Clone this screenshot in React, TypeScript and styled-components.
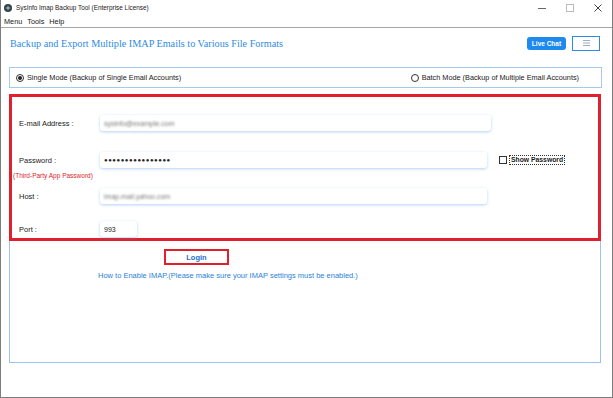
import styled, { createGlobalStyle } from 'styled-components';

const GlobalStyle = createGlobalStyle`
  html, body {
    margin: 0;
    padding: 0;
    background: #ffffff;
  }
  * {
    box-sizing: border-box;
  }
`

const Window = styled.div`
  width: 613px;
  height: 398px;
  border: 1px solid #7d7d7d;
  border-top: none;
  background: #ffffff;
  display: flex;
  flex-direction: column;
  font-family: "Liberation Sans", Arial, sans-serif;
  color: #1a1a1a;
  overflow: hidden;
`

const TitleBar = styled.div`
  height: 15px;
  display: flex;
  align-items: center;
  padding-left: 3px;
  font-size: 6.4px;
`

const AppIcon = styled.span`
  width: 8px;
  height: 8px;
  border-radius: 50%;
  background: radial-gradient(circle at 50% 50%, #9fb3b8 0 25%, #34474d 30% 100%);
  margin-right: 4px;
`

const TitleText = styled.span`
  flex: 1;
`

const WindowControls = styled.div`
  display: flex;
  align-items: center;
  height: 100%;
`

const ControlButton = styled.span`
  width: 28px;
  display: flex;
  justify-content: center;
  align-items: center;
  color: #555;
`

const MenuBar = styled.div`
  height: 13px;
  display: flex;
  align-items: center;
  gap: 5px;
  padding-left: 3px;
  font-size: 7.3px;
  border-bottom: 1px solid #a6a6a6;
`

const Header = styled.div`
  height: 30px;
  display: flex;
  align-items: center;
  justify-content: space-between;
  padding: 0 12px 0 9px;
`

const Heading = styled.h1`
  margin: 0;
  font-family: "Liberation Serif", "Times New Roman", serif;
  font-weight: normal;
  font-size: 10.2px;
  color: #2e8be2;
`

const HeaderActions = styled.div`
  display: flex;
  align-items: center;
  gap: 6px;
`

const ChatButton = styled.button`
  height: 13px;
  width: 39px;
  padding: 0;
  border: none;
  border-radius: 3px;
  background: #1d8af0;
  color: #fff;
  font-family: "Liberation Sans", Arial, sans-serif;
  font-weight: bold;
  font-size: 6.5px;
`

const MenuButton = styled.button`
  height: 15px;
  width: 28px;
  padding: 0;
  border: 1.5px solid #2d8be6;
  background: #fff;
  display: flex;
  align-items: center;
  justify-content: center;
`

const ModePanel = styled.div`
  margin: 9px 10px 0 8px;
  height: 21px;
  border: 1px solid #a7c9ee;
  display: flex;
  align-items: center;
  justify-content: space-between;
  padding: 0 22px 0 6px;
  font-size: 7.3px;
`

const RadioOption = styled.label`
  display: flex;
  align-items: center;
  gap: 3px;
`

const Radio = styled.span<{ $checked?: boolean }>`
  width: 8px;
  height: 8px;
  border-radius: 50%;
  border: 1px solid #333;
  display: flex;
  align-items: center;
  justify-content: center;

  &::after {
    content: '';
    width: 4px;
    height: 4px;
    border-radius: 50%;
    background: ${p => (p.$checked ? '#222' : 'transparent')};
  }
`

const Panel = styled.div`
  margin: 6px 11px 0 8px;
  height: 269px;
  border: 1px solid #9cc3ef;
  border-top: none;
`

const FormBox = styled.div`
  margin: 0 -1px;
  border: 3px solid #e0202d;
  height: 147px;
  padding: 18px 0 0 7px;
  display: flex;
  flex-direction: column;
`

const Row = styled.div<{ $gap: number }>`
  display: flex;
  align-items: center;
  height: 16px;
  margin-top: ${p => p.$gap}px;
`

const Label = styled.span`
  width: 81px;
  font-size: 7.5px;
`

const Field = styled.div<{ $width: number }>`
  width: ${p => p.$width}px;
  height: 16px;
  background: #fff;
  border-radius: 3px;
  box-shadow: 0 1px 3px rgba(90, 150, 235, 0.45);
  display: flex;
  align-items: center;
  padding-left: 4px;
  font-size: 7px;
  color: #222;
`

const Blurred = styled.span`
  filter: blur(1.2px);
  color: #777;
`

const Dots = styled.span`
  font-size: 6px;
  letter-spacing: 0.55px;
`

const ShowPassword = styled.label`
  margin-left: 12px;
  display: flex;
  align-items: center;
  gap: 2px;
  font-size: 6.8px;
  font-weight: bold;
`

const CheckBox = styled.span`
  width: 8px;
  height: 8px;
  border: 1px solid #333;
  background: #fff;
`

const FocusText = styled.span`
  border: 1px dotted #333;
  padding: 0 1px;
  line-height: 8px;
`

const Note = styled.div`
  margin: 3px 0 0 -6px;
  height: 10px;
  line-height: 10px;
  font-size: 6.5px;
  color: #d8262c;
`

const LoginButton = styled.button`
  margin: 8px 0 0 154px;
  width: 65px;
  height: 16px;
  padding: 0;
  border: 2px solid #e0202d;
  background: #fff;
  color: #1f6fcf;
  font-family: "Liberation Sans", Arial, sans-serif;
  font-weight: bold;
  font-size: 7.5px;
  display: block;
`

const HelpText = styled.div`
  margin: 6px 0 0 88px;
  line-height: 10px;
  font-size: 7.5px;
  color: #2a7fd8;
`

export default function App() {
  return (
    <>
      <GlobalStyle />
      <Window>
        <TitleBar>
          <AppIcon />
          <TitleText>SysInfo Imap Backup Tool (Enterprise License)</TitleText>
          <WindowControls>
            <ControlButton>
              <svg width="8" height="8" viewBox="0 0 8 8"><path d="M0 4.5h8" stroke="#666" strokeWidth="1" /></svg>
            </ControlButton>
            <ControlButton>
              <svg width="8" height="8" viewBox="0 0 8 8"><rect x="0.5" y="0.5" width="7" height="7" fill="none" stroke="#bbb" strokeWidth="1" /></svg>
            </ControlButton>
            <ControlButton>
              <svg width="8" height="8" viewBox="0 0 8 8"><path d="M0.5 0.5l7 7M7.5 0.5l-7 7" stroke="#444" strokeWidth="1" /></svg>
            </ControlButton>
          </WindowControls>
        </TitleBar>
        <MenuBar>
          <span>Menu</span>
          <span>Tools</span>
          <span>Help</span>
        </MenuBar>

        <Header>
          <Heading>Backup and Export Multiple IMAP Emails to Various File Formats</Heading>
          <HeaderActions>
            <ChatButton>Live Chat</ChatButton>
            <MenuButton>
              <svg width="7" height="6" viewBox="0 0 7 6">
                <path d="M0 0.5h7M0 3h7M0 5.5h7" stroke="#7f9bb8" strokeWidth="0.8" />
              </svg>
            </MenuButton>
          </HeaderActions>
        </Header>

        <ModePanel>
          <RadioOption>
            <Radio $checked />
            Single Mode (Backup of Single Email Accounts)
          </RadioOption>
          <RadioOption>
            <Radio />
            Batch Mode (Backup of Multiple Email Accounts)
          </RadioOption>
        </ModePanel>

        <Panel>
          <FormBox>
            <Row $gap={0}>
              <Label>E-mail Address :</Label>
              <Field $width={391}><Blurred>sysinfo@example.com</Blurred></Field>
            </Row>
            <Row $gap={21}>
              <Label>Password :</Label>
              <Field $width={387}><Dots>●●●●●●●●●●●●●●●●</Dots></Field>
              <ShowPassword>
                <CheckBox />
                <FocusText>Show Password</FocusText>
              </ShowPassword>
            </Row>
            <Note>(Third-Party App Password)</Note>
            <Row $gap={7}>
              <Label>Host :</Label>
              <Field $width={387}><Blurred>imap.mail.yahoo.com</Blurred></Field>
            </Row>
            <Row $gap={17}>
              <Label>Port :</Label>
              <Field $width={37}>993</Field>
            </Row>
          </FormBox>
          <LoginButton>Login</LoginButton>
          <HelpText>How to Enable IMAP.(Please make sure your IMAP settings must be enabled.)</HelpText>
        </Panel>
      </Window>
    </>
  );
}
